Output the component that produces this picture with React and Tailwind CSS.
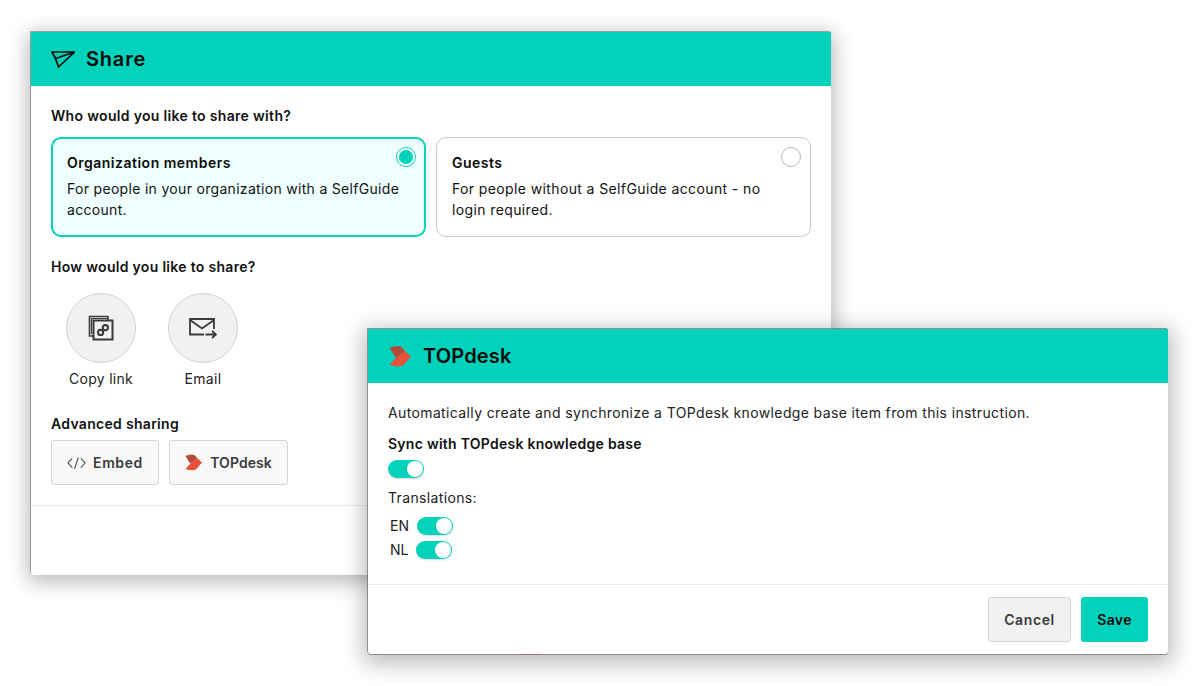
import React from 'react';

const font = 'font-["Inter","Noto_Sans",sans-serif]';

const TopdeskLogo = ({ className }) => (
  <svg viewBox="0 0 22 21" className={className}>
    <path d="M0.5 2 Q4 0 9 0 Q12 0 13.5 2 L16 5 L7 12 Z" fill="#b5493a" />
    <path d="M7 12 L16 5 L22 10.5 L15 18.5 Q13 20.5 10 20.5 Q4 20.5 0.5 18.5 Z" fill="#e8523a" />
  </svg>
);

const Toggle = () => (
  <div className="flex h-[18px] w-9 items-center justify-end rounded-full bg-[#00d2bb] pr-px shadow-[0_1px_2px_rgba(0,0,0,0.15)]">
    <div className="h-4 w-4 rounded-full bg-white" />
  </div>
);

const OptionCard = ({ title, lines, selected, descClass }) => (
  <div className={`relative h-[100px] w-[375px] rounded-[10px] ${selected ? 'border-2 border-[#00d2bb] bg-[#eefffd] px-[14px] pt-[13px]' : 'border border-[#c8c8c8] bg-white px-[15px] pt-[14px]'}`}>
    <div className="text-[14px] leading-[21px] font-semibold tracking-[0.5px] text-[#0a0a0a]">{title}</div>
    <div className={`mt-[5px] text-[14px] leading-[21px] text-[#111] ${descClass}`}>
      {lines.map((l) => <div key={l}>{l}</div>)}
    </div>
    {/* radio sits over the card corner */}
    {selected ? (
      <div className="absolute top-[8px] right-[8px] flex h-5 w-5 items-center justify-center rounded-full border border-[#00d2bb] bg-white">
        <div className="h-[14px] w-[14px] rounded-full bg-[#00d2bb]" />
      </div>
    ) : (
      <div className="absolute top-[9px] right-[9px] h-5 w-5 rounded-full border border-[#b5b5b5] bg-white" />
    )}
  </div>
);

const ShareAction = ({ label, children }) => (
  <div className="flex w-[70px] flex-col items-center">
    <div className="flex h-[70px] w-[70px] items-center justify-center rounded-full border border-[#d4d4d4] bg-[#f1f1f1]">
      {children}
    </div>
    <div className="mt-[5px] whitespace-nowrap text-[14px] leading-[21px] tracking-[0.3px] text-[#222]">{label}</div>
  </div>
);

const SmallButton = ({ children, className }) => (
  <div className={`flex h-[45px] items-center justify-center rounded-[3px] border border-[#d4d4d4] bg-[#f9f9f9] text-[14px] font-semibold text-[#3a3a3a] ${className}`}>
    {children}
  </div>
);

const ShareWindow = () => (
  <div className="absolute top-[32px] left-[31px] flex h-[543px] w-[800px] flex-col rounded-b-[3px] bg-white shadow-[-1px_-1px_0_0_rgba(110,110,110,0.6),0_4px_20px_3px_rgba(0,0,0,0.28)]">
    <div className="flex h-[54px] shrink-0 items-center gap-[11px] bg-[#00d2bb] px-5">
      <svg viewBox="0 0 24 18" className="h-[18px] w-6" fill="none" stroke="#0a0a0a" strokeWidth="1.7" strokeLinejoin="round">
        <path d="M1 2 H23.5 L7.5 17 L4.5 8.5 Z" />
        <path d="M4.5 8.5 L23.5 2" />
      </svg>
      <span className="text-[20px] font-semibold tracking-[0.8px] text-[#0a0a0a]">Share</span>
    </div>
    <div className="flex-1 px-5 pt-[19px]">
      <div className="text-[14px] leading-[21px] font-semibold tracking-[0.32px] text-[#111]">Who would you like to share with?</div>
      <div className="mt-[11px] flex gap-[10px]">
        <OptionCard selected descClass="tracking-[0.31px]" title="Organization members" lines={['For people in your organization with a SelfGuide', 'account.']} />
        <OptionCard descClass="tracking-[0.38px]" title="Guests" lines={['For people without a SelfGuide account - no', 'login required.']} />
      </div>
      <div className="mt-[19px] text-[14px] leading-[21px] font-semibold tracking-[0.3px] text-[#111]">How would you like to share?</div>
      <div className="mt-4 flex gap-8 pl-[15px]">
        <ShareAction label="Copy link">
          <svg viewBox="0 0 26 26" className="h-[26px] w-[26px]" fill="none" stroke="#3a3a3a">
            <path d="M5 21 H1.5 V1.5 H20 V5" strokeWidth="1.6" />
            <path d="M3.5 19 V3.5 H20" strokeWidth="1.2" />
            <rect x="5.5" y="5.5" width="19" height="19" strokeWidth="2" />
            <circle cx="12.6" cy="17.4" r="2.6" strokeWidth="2" />
            <circle cx="17.4" cy="12.6" r="2.6" strokeWidth="2" />
          </svg>
        </ShareAction>
        <ShareAction label="Email">
          <svg viewBox="0 0 28 22" className="h-[22px] w-7 translate-y-px" fill="none" stroke="#3a3a3a" strokeWidth="1.8">
            <path d="M15 16.5 H1 V1 H25 V11" />
            <path d="M1 2 L13 10.5 L25 2" />
            <path d="M16.5 16.5 H27 M23 13 L27 16.5 L23 20" />
          </svg>
        </ShareAction>
      </div>
      <div className="mt-6 text-[14px] leading-[21px] font-semibold tracking-[0.3px] text-[#111]">Advanced sharing</div>
      <div className="mt-[6px] flex gap-[10px]">
        <SmallButton className="w-[108px] gap-[7px] tracking-[0.6px]">
          <svg viewBox="0 0 20 14" className="h-[14px] w-[19px]" fill="none" stroke="#3a3a3a" strokeWidth="1.1">
            <path d="M5.5 2 L1 7 L5.5 12 M14.5 2 L19 7 L14.5 12 M12 1 L8 13" />
          </svg>
          Embed
        </SmallButton>
        <SmallButton className="w-[119px] gap-2 tracking-[0.05px]">
          <TopdeskLogo className="h-[17px] w-[17px]" />
          TOPdesk
        </SmallButton>
      </div>
    </div>
    <div className="h-[70px] shrink-0 border-t border-[#ebebeb]" />
  </div>
);

const TopdeskWindow = () => (
  <div className="absolute top-[329px] left-[368px] flex h-[325px] w-[800px] flex-col rounded-b-[3px] bg-white shadow-[-1px_-1px_0_0_rgba(110,110,110,0.7),0_1px_0_0_rgba(110,110,110,0.7),0_5px_22px_5px_rgba(0,0,0,0.26)]">
    <div className="flex h-[54px] shrink-0 items-center gap-3 bg-[#00d2bb] pl-[21px]">
      <TopdeskLogo className="h-[21px] w-[22px]" />
      <span className="text-[20px] font-semibold tracking-[0.15px] text-[#0a0a0a]">TOPdesk</span>
    </div>
    <div className="flex-1 pt-[19px] pl-5">
      <div className="text-[14px] leading-[21px] tracking-[0.37px] text-[#222]">Automatically create and synchronize a TOPdesk knowledge base item from this instruction.</div>
      <div className="mt-[10px] text-[14px] leading-[21px] font-semibold tracking-[0.26px] text-[#111]">Sync with TOPdesk knowledge base</div>
      <div className="mt-[6px]"><Toggle /></div>
      <div className="mt-[9px] text-[14px] leading-[21px] tracking-[0.35px] text-[#222]">Translations:</div>
      <div className="mt-[9px] flex flex-col gap-[6px] pl-[2px]">
        <div className="flex items-center gap-[10px]">
          <span className="w-[17px] text-[14px] leading-[18px] text-[#222]">EN</span>
          <Toggle />
        </div>
        <div className="flex items-center gap-[9px]">
          <span className="w-[17px] text-[14px] leading-[18px] text-[#222]">NL</span>
          <Toggle />
        </div>
      </div>
    </div>
    <div className="flex h-[70px] shrink-0 items-start justify-end gap-[10px] border-t border-[#ebebeb] pt-3 pr-5">
      <div className="flex h-[45px] w-[83px] items-center justify-center rounded-[3px] border border-[#d4d4d4] bg-[#f1f1f1] text-[14px] font-semibold tracking-[0.6px] text-[#3a3a3a]">Cancel</div>
      <div className="flex h-[45px] w-[67px] items-center justify-center rounded-[3px] bg-[#00d2bb] text-[14px] font-semibold tracking-[0.4px] text-[#0a0a0a]">Save</div>
    </div>
    {/* faint red trace along the bottom edge */}
    <div className="absolute -bottom-px left-[154px] h-px w-[18px] bg-[#b5493a]/40" />
  </div>
);

export default function App() {
  return (
    <div className={`relative h-[686px] w-[1199px] overflow-hidden bg-white ${font}`}>
      <ShareWindow />
      <TopdeskWindow />
    </div>
  );
}
